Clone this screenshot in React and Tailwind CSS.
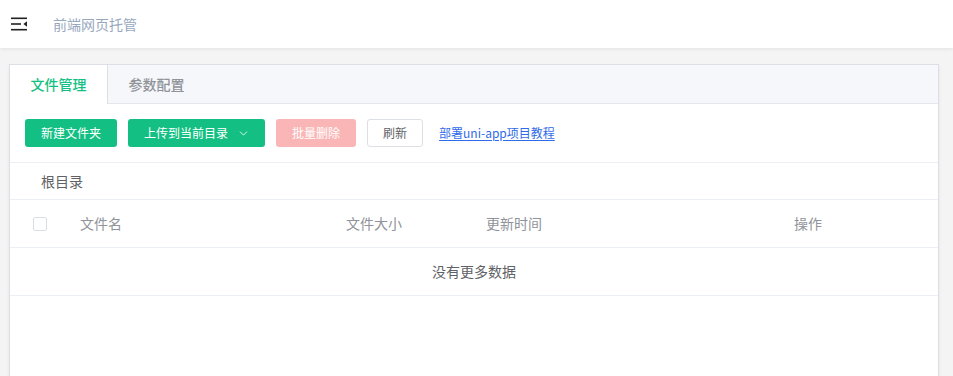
import { ChevronDown } from "lucide-react";

const font = { fontFamily: '"Noto Sans CJK SC", "Noto Sans", sans-serif' };

function MenuIcon() {
  return (
    <svg width="17" height="14" viewBox="0 0 17 14" className="block">
      <rect x="0" y="0.5" width="16" height="1.6" fill="#222" />
      <rect x="0" y="6.2" width="10" height="1.6" fill="#222" />
      <rect x="0" y="11.9" width="16" height="1.6" fill="#222" />
      <path d="M16 4.2 L12.4 7 L16 9.8 Z" fill="#222" />
    </svg>
  );
}

function App() {
  return (
    <div className="w-[953px] h-[376px] overflow-hidden bg-[#f4f4f5] text-[#606266]" style={font}>
      <div className="h-[48px] bg-white flex items-center shadow-[0_1px_4px_rgba(0,0,0,0.08)] relative z-10">
        <div className="pl-[11px] pr-[25px]">
          <MenuIcon />
        </div>
        <span className="text-[14px] text-[#97a8be]">前端网页托管</span>
      </div>

      <div className="pt-[16px] pl-[9px] pr-[14px]">
        <div className="bg-white border border-[#dcdfe6] shadow-[0_2px_4px_rgba(0,0,0,0.06)] h-[320px]">
          <div className="flex bg-[#f5f7fa] border-b border-[#e4e7ed] h-[39px]">
            <div className="w-[98px] -mb-px bg-white border-r border-[#dcdfe6] flex items-center justify-center text-[14px] text-[#14bf83] font-medium">
              文件管理
            </div>
            <div className="w-[97px] flex items-center justify-center text-[14px] text-[#909399] font-medium">
              参数配置
            </div>
          </div>

          <div className="flex items-center gap-[11px] px-[15px] h-[59px] border-b border-[#ebeef5]">
            <button className="h-[28px] px-[16px] rounded-[3px] bg-[#14bf83] text-white text-[12px]">新建文件夹</button>
            <button className="h-[28px] pl-[16px] pr-[15px] rounded-[3px] bg-[#14bf83] text-white text-[12px] flex items-center gap-[9px]">
              上传到当前目录
              <ChevronDown size={13} strokeWidth={1.5} />
            </button>
            <button className="h-[28px] px-[16px] rounded-[3px] bg-[#fab6b6] text-white text-[12px]">批量删除</button>
            <button className="h-[28px] px-[15px] rounded-[3px] bg-white border border-[#dcdfe6] text-[#606266] text-[12px]">刷新</button>
            <a className="ml-[5px] text-[12px] text-[#2f6be8] underline underline-offset-2">部署uni-app项目教程</a>
          </div>

          <div className="h-[37px] flex items-center pl-[31px] text-[14px] text-[#606266] border-b border-[#ebeef5]">
            根目录
          </div>

          <div className="h-[48px] flex items-center text-[14px] text-[#909399] border-b border-[#ebeef5]">
            <div className="w-[70px] pl-[23px]">
              <div className="w-[14px] h-[14px] rounded-[2px] border border-[#dcdfe6] bg-white" />
            </div>
            <div className="w-[266px]">文件名</div>
            <div className="w-[140px]">文件大小</div>
            <div className="w-[308px]">更新时间</div>
            <div>操作</div>
          </div>

          <div className="h-[48px] flex items-center justify-center text-[14px] text-[#606266] border-b border-[#ebeef5]">
            没有更多数据
          </div>
        </div>
      </div>
    </div>
  );
}

export default App;
